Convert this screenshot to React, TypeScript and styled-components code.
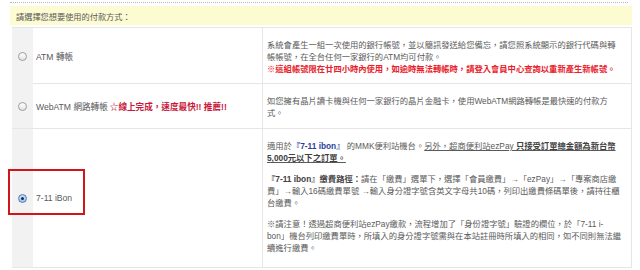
import React from 'react';
import styled, { createGlobalStyle, css } from 'styled-components';

const GlobalStyle = createGlobalStyle`
  body {
    margin: 0;
    background: #ffffff;
    font-family: 'Liberation Sans', 'Noto Sans CJK TC', sans-serif;
    color: #5a5a5a;
  }
`;

const Page = styled.div`
  width: 622px;
  padding: 2px 0 0 10px;
`;

const DottedRule = styled.div`
  width: 618px;
  border-top: 1px dotted #b8b8b8;
`;

const Header = styled.div`
  margin-top: 3px;
  height: 19px;
  display: flex;
  align-items: center;
  padding-left: 6px;
  background: #fdfbd2;
  font-size: 8.2px;
  color: #5a5a5a;
`;

const Table = styled.div`
  margin: 2px 0 0 2px;
  width: 619px;
  border: 1px solid #e6e6e6;
  border-left: none;
`;

const Row = styled.div<{ $height: number }>`
  position: relative;
  display: grid;
  grid-template-columns: 21px 229px 1fr;
  height: ${(p) => p.$height}px;
  border-bottom: 1px solid #e6e6e6;
  box-sizing: border-box;
  &:last-child {
    border-bottom: none;
  }
`;

const RadioCell = styled.div`
  display: flex;
  align-items: center;
  justify-content: center;
  background: #f2f2f2;
`;

const Radio = styled.span<{ $checked: boolean }>`
  position: relative;
  width: 9px;
  height: 9px;
  border-radius: 50%;
  border: 1px solid #9c9c9c;
  background: linear-gradient(#ffffff, #e4e4e4);
  box-sizing: border-box;
  ${(p) =>
    p.$checked &&
    css`
      border-color: #5a7fb8;
      background: radial-gradient(circle at 50% 35%, #d6ebff, #7fb2ea);
      &::after {
        content: '';
        position: absolute;
        left: 2px;
        top: 2px;
        width: 3px;
        height: 3px;
        border-radius: 50%;
        background: #1d2a44;
      }
    `}
`;

const LabelCell = styled.div`
  display: flex;
  align-items: center;
  padding-left: 3px;
  font-size: 8.6px;
  color: #5a5a5a;
  white-space: nowrap;
`;

const Hot = styled.span`
  margin-left: 2px;
  color: #c8193c;
  font-weight: bold;
`;

const DescCell = styled.div`
  border-left: 1px solid #e6e6e6;
  padding: 11px 4px 0 4px;
  font-size: 8.3px;
  line-height: 12px;
  color: #5a5a5a;
  white-space: nowrap;
`;

const Para = styled.p<{ $gap?: number }>`
  margin: ${(p) => p.$gap ?? 0}px 0 9px 0;
`;

const Alert = styled.span`
  color: #e8202a;
  font-weight: bold;
`;

const Strong = styled.b`
  color: #404040;
`;

const Brand = styled.b`
  color: #2a3f9a;
`;

const Under = styled.span`
  text-decoration: underline;
`;

const Marker = styled.div`
  position: absolute;
  left: -4px;
  top: 40px;
  width: 77px;
  height: 46px;
  border: 2px solid #d0161b;
  box-sizing: border-box;
  pointer-events: none;
`;

interface Method {
  id: string;
  label: React.ReactNode;
  checked?: boolean;
  marked?: boolean;
  height: number;
  desc: React.ReactNode;
}

const methods: Method[] = [
  {
    id: 'atm',
    label: 'ATM 轉帳',
    height: 56,
    desc: (
      <Para>
        系統會產生一組一次使用的銀行帳號，並以簡訊發送給您備忘，請您照系統顯示的銀行代碼與轉
        <br />
        帳帳號，在全台任何一家銀行的ATM均可付款。
        <br />
        <Alert>※這組帳號限在廿四小時內使用，如逾時無法轉帳時，請登入會員中心查詢以重新產生新帳號。</Alert>
      </Para>
    ),
  },
  {
    id: 'webatm',
    label: (
      <>
        WebATM 網路轉帳 <Hot>☆線上完成，速度最快!! 推薦!!</Hot>
      </>
    ),
    height: 45,
    desc: (
      <Para>
        如您擁有晶片讀卡機與任何一家銀行的晶片金融卡，使用WebATM網路轉帳是最快速的付款方
        <br />
        式。
      </Para>
    ),
  },
  {
    id: 'ibon',
    label: '7-11 iBon',
    checked: true,
    marked: true,
    height: 138,
    desc: (
      <>
        <Para>
          適用於<Brand>『7-11 ibon』</Brand> 的MMK便利站機台。
          <Under>
            另外，超商便利站ezPay <Strong>只接受訂單總金額為新台幣</Strong>
            <br />
            <Strong>5,000元以下之訂單。</Strong>
          </Under>
        </Para>
        <Para>
          <Strong>『7-11 ibon』繳費路徑：</Strong>請在「繳費」選單下，選擇「會員繳費」→「ezPay」→「專案商店繳
          <br />
          費」→輸入16碼繳費單號 →輸入身分證字號含英文字母共10碼，列印出繳費條碼單後，請持往櫃
          <br />
          台繳費。
        </Para>
        <Para $gap={8}>
          ※請注意！透過超商便利站ezPay繳款，流程增加了「身份證字號」驗證的欄位，於「7-11 i-
          <br />
          bon」機台列印繳費單時，所填入的身分證字號需與在本站註冊時所填入的相同，如不同則無法繼
          <br />
          續進行繳費。
        </Para>
      </>
    ),
  },
];

const App = () => (
  <>
    <GlobalStyle />
    <Page>
      <DottedRule />
      <Header>請選擇您想要使用的付款方式：</Header>
      <Table>
        {methods.map((m) => (
          <Row key={m.id} $height={m.height}>
            <RadioCell>
              <Radio $checked={!!m.checked} />
            </RadioCell>
            <LabelCell>{m.label}</LabelCell>
            <DescCell>{m.desc}</DescCell>
            {m.marked && <Marker />}
          </Row>
        ))}
      </Table>
    </Page>
  </>
);

export default App;
